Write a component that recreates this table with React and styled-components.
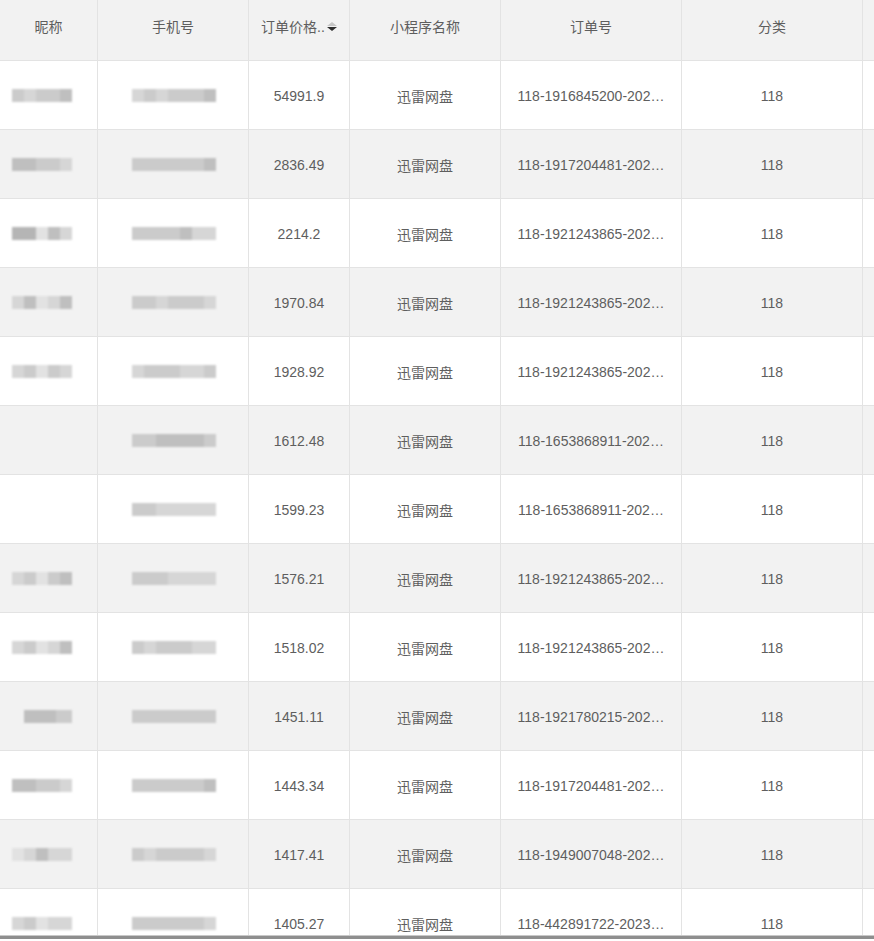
import React from "react";
import styled, { createGlobalStyle } from "styled-components";

const GlobalStyle = createGlobalStyle`
    html, body {
        margin: 0;
        padding: 0;
        background: #fff;
    }
    body {
        font-family: "Liberation Sans", Arial, "Noto Sans CJK SC", sans-serif;
    }
`;

const COLS = "98px 151px 101px 151px 181px 181px 120px";

const Page = styled.div`
    width: 874px;
    height: 941px;
    overflow: hidden;
    display: flex;
    flex-direction: column;
`;

const TableArea = styled.div`
    height: 935px;
    overflow: hidden;
    flex-shrink: 0;
`;

const Row = styled.div`
    display: grid;
    grid-template-columns: ${COLS};
    height: ${(p) => (p.$head ? "61px" : "69px")};
    background: ${(p) => (p.$shade ? "#f2f2f2" : "#fff")};
    border-bottom: 1px solid #e3e3e3;
    box-sizing: border-box;
`;

const Cell = styled.div`
    display: flex;
    align-items: center;
    justify-content: ${(p) => (p.$left ? "flex-start" : "center")};
    padding: ${(p) => (p.$head ? "0 10px 8px" : "2px 12px 0")};
    border-right: 1px solid #e3e3e3;
    color: #5e5e5e;
    font-size: 14px;
    white-space: nowrap;
    overflow: hidden;
    min-width: 0;
`;

const SortIcon = styled.span`
    display: inline-flex;
    flex-direction: column;
    gap: 1px;
    margin-left: 2px;
    &::before,
    &::after {
        content: "";
        border-left: 5px solid transparent;
        border-right: 5px solid transparent;
    }
    &::before {
        border-bottom: 4px solid #c6c6c6;
    }
    &::after {
        border-top: 4px solid #2e2e2e;
    }
`;

const Mosaic = styled.div`
    display: flex;
    height: 13px;
    width: ${(p) => p.$w}px;
    filter: blur(1.2px);
`;

const Tile = styled.span`
    flex: 1;
    background: ${(p) => p.$c};
`;

const Spacer = styled.div`
    width: ${(p) => p.$w}px;
    flex-shrink: 0;
`;

const shades = {
    a: "#cbcbcb",
    b: "#bfbfbf",
    c: "#d6d6d6",
    d: "#e2e2e2",
    e: "#b5b5b5",
};

const Blur = ({ offset, width, pattern }) => (
    <>
        <Spacer $w={offset} />
        <Mosaic $w={width}>
            {pattern.split("").map((k, i) => (
                <Tile key={i} $c={shades[k]} />
            ))}
        </Mosaic>
    </>
);

const rows = [
    { nick: "acaab", phone: "cacaaab", price: "54991.9", order: "118-1916845200-202…" },
    { nick: "bbaac", phone: "aaaaaab", price: "2836.49", order: "118-1917204481-202…" },
    { nick: "eedbc", phone: "aaaabcc", price: "2214.2", order: "118-1921243865-202…" },
    { nick: "cbdcb", phone: "aacaaac", price: "1970.84", order: "118-1921243865-202…" },
    { nick: "cadac", phone: "caaacca", price: "1928.92", order: "118-1921243865-202…" },
    { nick: null, phone: "aabbbba", price: "1612.48", order: "118-1653868911-202…" },
    { nick: null, phone: "aaccccc", price: "1599.23", order: "118-1653868911-202…" },
    { nick: "cadab", phone: "aaacccc", price: "1576.21", order: "118-1921243865-202…" },
    { nick: "cadcb", phone: "acaaacc", price: "1518.02", order: "118-1921243865-202…" },
    { nick: "bba", phone: "aaaaaaa", price: "1451.11", order: "118-1921780215-202…", short: true },
    { nick: "bbaac", phone: "aaaaaab", price: "1443.34", order: "118-1917204481-202…" },
    { nick: "dcbcc", phone: "acaaaac", price: "1417.41", order: "118-1949007048-202…" },
    { nick: "cadcc", phone: "aaaaaac", price: "1405.27", order: "118-442891722-2023…" },
];

const App = () => {
    return (
        <Page>
            <GlobalStyle />
            <TableArea>
                <Row $head $shade>
                    <Cell $head>昵称</Cell>
                    <Cell $head>手机号</Cell>
                    <Cell $head>
                        订单价格..
                        <SortIcon />
                    </Cell>
                    <Cell $head>小程序名称</Cell>
                    <Cell $head>订单号</Cell>
                    <Cell $head>分类</Cell>
                    <Cell $head />
                </Row>
                {rows.map((r, i) => (
                    <Row key={i} $shade={i % 2 === 1}>
                        <Cell $left style={{ padding: 0 }}>
                            {r.nick && (
                                <Blur
                                    offset={r.short ? 24 : 12}
                                    width={r.short ? 48 : 60}
                                    pattern={r.nick}
                                />
                            )}
                        </Cell>
                        <Cell $left style={{ padding: 0 }}>
                            <Blur offset={34} width={84} pattern={r.phone} />
                        </Cell>
                        <Cell>{r.price}</Cell>
                        <Cell>迅雷网盘</Cell>
                        <Cell>{r.order}</Cell>
                        <Cell>118</Cell>
                        <Cell />
                    </Row>
                ))}
            </TableArea>
            <ScrollTrack>
                <ScrollThumb />
            </ScrollTrack>
        </Page>
    );
};

const ScrollTrack = styled.div`
    height: 6px;
    background: #fff;
    border-top: 1px solid #c8c8c8;
    box-sizing: border-box;
`;

const ScrollThumb = styled.div`
    height: 3px;
    background: #8e8e8e;
    width: 100%;
`;

export default App;
